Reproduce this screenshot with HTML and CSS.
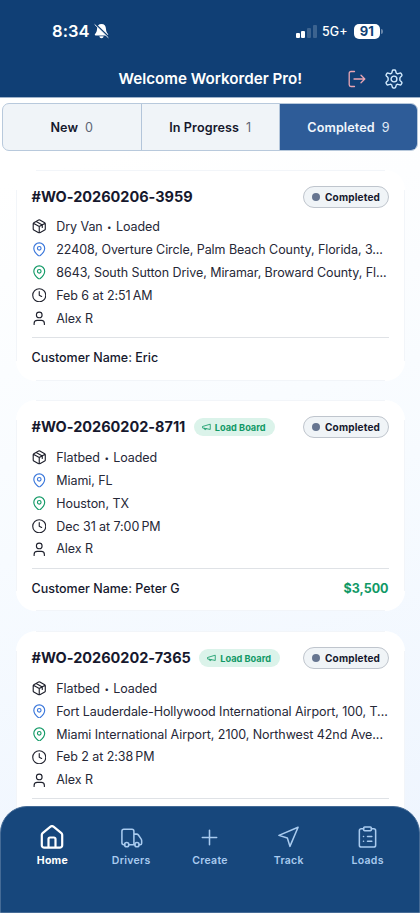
FILE: index.html
```html
<!DOCTYPE html>
<html lang="en">
<head>
<meta charset="utf-8">
<title>Workorders</title>
<link rel="stylesheet" href="styles.css">
</head>
<body>
<svg class="defs" width="0" height="0">
  <symbol id="box" viewBox="0 0 24 24"><path d="M22 8a2 2 0 0 0-1-1.730l-8-4.500a2 2 0 0 0-2 0l-8 4.500A2 2 0 0 0 2 8v8.500a2 2 0 0 0 1 1.730l8 4.500a2 2 0 0 0 2 0l8-4.500A2 2 0 0 0 22 16.500ZM2.300 7l9.700 5.500L21.700 7M12 23V12.500M7 4.200l10 5.700v4"/></symbol>
  <symbol id="pin" viewBox="0 0 24 24"><path d="M21 10.500c0 5-5.500 10.500-7.800 12.200a1.900 1.900 0 0 1-2.400 0C8.500 21 3 15.500 3 10.500a9 9 0 0 1 18 0"/><circle cx="12" cy="10.500" r="3"/></symbol>
  <symbol id="clock" viewBox="0 0 24 24"><circle cx="12" cy="12" r="10.800"/><path d="M12 6v6l4 2"/></symbol>
  <symbol id="user" viewBox="0 0 24 24"><circle cx="12" cy="6.500" r="4.700"/><path d="M20.500 22.500v-2a5 5 0 0 0-5-5h-7a5 5 0 0 0-5 5v2"/></symbol>
  <symbol id="horn" viewBox="0 0 24 24"><path d="M2 10.500 22 4.500v14L2 14.500ZM11.600 17a3 3 0 1 1-5.800-1.600"/></symbol>
</svg>

<header class="top">
  <div class="status">
    <div class="time">8:34
      <svg class="bell" viewBox="0 0 16 16"><path fill="#fff" d="M8 .5C4.900.5 3.400 2.700 3.300 5.300c-.1 3-.9 4.500-2.200 5.800-.5.600-.2 1.600.6 1.600h12.600c.8 0 1.100-1 .6-1.600-1.300-1.300-2.100-2.800-2.200-5.800C12.600 2.700 11.100.5 8 .5M5.700 13.500h4.600c-.2 1.300-1.100 2.100-2.300 2.100s-2.100-.8-2.300-2.100"/><path d="M2.300 1.300 15.300 14" stroke="#103f75" stroke-width="1.700"/><path d="M1 1.300 15 14.900" stroke="#fff" stroke-width="1" stroke-linecap="round"/></svg>
    </div>
    <div class="signals">
      <div class="bars"><i></i><i></i><i></i><i></i></div>
      <span class="net">5G+</span>
      <div class="battery"><b>91</b><i></i></div>
    </div>
  </div>
  <div class="titlebar">
    <h1>Welcome Workorder Pro!</h1>
    <div class="actions">
      <svg class="logout" viewBox="0 0 18 18"><path d="M6.500 1.500H3A1.800 1.800 0 0 0 1.200 3.300v11.400A1.800 1.800 0 0 0 3 16.500h3.500M6 9h10.700M13 5.200 16.800 9 13 12.800"/></svg>
      <svg class="gear" viewBox="0 0 20 20"><path d="M8.300 1.900Q8.500 1 9.400 1h1.200q.9 0 1.100.9l.4 1.700q.1.500.6.700l.5.300q.5.300 1 .1l1.700-.6q.8-.3 1.300.5l.6 1q.4.800-.2 1.400L16.300 8.200q-.4.400-.4.900v1.800q0 .5.400.9l1.300 1.200q.6.600.2 1.400l-.6 1q-.5.800-1.300.5l-1.700-.6q-.5-.2-1 .1l-.5.300q-.5.200-.6.700l-.4 1.700q-.2.900-1.100.9H9.400q-.9 0-1.100-.9l-.4-1.700q-.1-.5-.6-.7l-.5-.3q-.5-.3-1-.1l-1.700.6q-.8.300-1.300-.5l-.6-1q-.4-.8.2-1.400l1.300-1.200q.4-.4.400-.9V9.100q0-.5-.4-.9L2.400 7Q1.800 6.400 2.200 5.600l.6-1q.5-.8 1.300-.5l1.700.6q.5.200 1-.1l.5-.3q.5-.2.600-.7Z"/><circle cx="10" cy="10" r="2.900"/></svg>
    </div>
  </div>
</header>

<nav class="tabs">
  <div class="tab"><b>New</b><span>0</span></div>
  <div class="tab"><b>In Progress</b><span>1</span></div>
  <div class="tab active"><b>Completed</b><span>9</span></div>
</nav>

<main class="list">
  <article class="card">
    <div class="head"><h2>#WO-20260206-3959</h2><span class="state"><i></i>Completed</span></div>
    <div class="row"><svg><use href="#box"/></svg><span>Dry Van <small>•</small> Loaded</span></div>
    <div class="row"><svg class="from"><use href="#pin"/></svg><span>22408, Overture Circle, Palm Beach County, Florida, 3...</span></div>
    <div class="row"><svg class="to"><use href="#pin"/></svg><span>8643, South Sutton Drive, Miramar, Broward County, Fl...</span></div>
    <div class="row"><svg><use href="#clock"/></svg><span>Feb 6 at 2:51&#8239;AM</span></div>
    <div class="row"><svg><use href="#user"/></svg><span>Alex R</span></div>
    <div class="foot"><span>Customer Name: Eric</span></div>
  </article>
  <article class="card">
    <div class="head"><h2>#WO-20260202-8711</h2><span class="board"><svg><use href="#horn"/></svg>Load Board</span><span class="state"><i></i>Completed</span></div>
    <div class="row"><svg><use href="#box"/></svg><span>Flatbed <small>•</small> Loaded</span></div>
    <div class="row"><svg class="from"><use href="#pin"/></svg><span>Miami, FL</span></div>
    <div class="row"><svg class="to"><use href="#pin"/></svg><span>Houston, TX</span></div>
    <div class="row"><svg><use href="#clock"/></svg><span>Dec 31 at 7:00&#8239;PM</span></div>
    <div class="row"><svg><use href="#user"/></svg><span>Alex R</span></div>
    <div class="foot"><span>Customer Name: Peter G</span><b>$3,500</b></div>
  </article>
  <article class="card">
    <div class="head"><h2>#WO-20260202-7365</h2><span class="board"><svg><use href="#horn"/></svg>Load Board</span><span class="state"><i></i>Completed</span></div>
    <div class="row"><svg><use href="#box"/></svg><span>Flatbed <small>•</small> Loaded</span></div>
    <div class="row"><svg class="from"><use href="#pin"/></svg><span>Fort Lauderdale-Hollywood International Airport, 100, T...</span></div>
    <div class="row"><svg class="to"><use href="#pin"/></svg><span>Miami International Airport, 2100, Northwest 42nd Ave...</span></div>
    <div class="row"><svg><use href="#clock"/></svg><span>Feb 2 at 2:38&#8239;PM</span></div>
    <div class="row"><svg><use href="#user"/></svg><span>Alex R</span></div>
    <div class="foot"></div>
  </article>
</main>

<nav class="dock">
  <a class="item on"><svg viewBox="0 0 24 24"><path d="M1.800 9.800q0-1 .8-1.700L10.500 1.700q1.500-1.200 3 0l7.900 6.400q.8.700.8 1.700v10.400a2.500 2.500 0 0 1-2.500 2.500H4.300a2.500 2.500 0 0 1-2.500-2.500ZM8.500 22.500V14a1.500 1.500 0 0 1 1.500-1.500h4a1.500 1.500 0 0 1 1.500 1.500v8.500"/></svg><span>Home</span></a>
  <a class="item"><svg viewBox="0 0 24 24"><path d="M5 20H4a2 2 0 0 1-2-2V6a2 2 0 0 1 2-2h8.500a2 2 0 0 1 2 2v14M9.200 20h6.300M14.500 9h3q1 0 1.700.9l2.900 4.300q.5.800.5 1.800v2.500q0 1.500-1.500 1.500h-1"/><circle cx="7" cy="20" r="2.200"/><circle cx="17.700" cy="20" r="2.200"/></svg><span>Drivers</span></a>
  <a class="item"><svg viewBox="0 0 24 24"><path d="M4.500 12.500h15M12 5v15"/></svg><span>Create</span></a>
  <a class="item"><svg viewBox="0 0 24 24"><path d="M22 1.800 2 10.300l8.800 2.700 2.700 8.800Z"/></svg><span>Track</span></a>
  <a class="item"><svg viewBox="0 0 24 24"><rect x="8" y="1.500" width="8" height="4" rx="1"/><path d="M16 3.500h2.500a2 2 0 0 1 2 2V20.500a2 2 0 0 1-2 2h-13a2 2 0 0 1-2-2V5.500a2 2 0 0 1 2-2H8M12 11.500h4.500M12 16.500h4.500M7.800 11.500h.1M7.800 16.500h.1"/></svg><span>Loads</span></a>
</nav>
</body>
</html>
```
FILE: styles.css
```css
* { box-sizing: border-box; }
body {
  margin: 0;
  width: 420px;
  height: 913px;
  overflow: hidden;
  position: relative;
  font-family: Inter, "Liberation Sans", sans-serif;
  color: #16182d;
  background: linear-gradient(165deg, #fff 18%, #f7fbff 55%, #edf4fe 100%);
}
svg { fill: none; stroke: currentColor; stroke-linecap: round; stroke-linejoin: round; flex: none; display: block; }
.defs { position: absolute; }
h1, h2 { margin: 0; }

.top { height: 97.5px; background: #103f75; color: #fff; border-bottom: 1px solid #9eb2ca; }
.status { height: 60px; padding: 2px 37px 0 52px; display: flex; justify-content: space-between; align-items: center; }
.time { display: flex; align-items: center; gap: 4px; font-size: 16.5px; font-weight: 600; letter-spacing: .1px; }
.bell { width: 15px; height: 16px; stroke: none; }
.signals { display: flex; align-items: center; }
.bars { display: flex; align-items: flex-end; gap: 1.600px; height: 13px; }
.bars i { width: 4px; border-radius: 1px; background: #fff; height: 5px; }
.bars i:nth-child(2) { height: 7px; }
.bars i:nth-child(3) { height: 10px; background: #3c638f; }
.bars i:nth-child(4) { height: 13px; background: #3c638f; }
.net { margin: 1px 6px 0 5.500px; font-size: 12.500px; font-weight: 500; }
.battery { display: flex; align-items: center; gap: 1px; }
.battery b { width: 26.5px; height: 15px; border-radius: 5px; background: #fff; color: #103f75; font-size: 13px; line-height: 15.500px; text-align: center; font-weight: 700; }
.battery i { width: 2px; height: 5px; border-radius: 0 2px 2px 0; background: #6886aa; }
.titlebar { height: 37px; display: grid; grid-template-columns: 118.500px 1fr auto; padding-right: 16px; align-items: center; }
.titlebar h1 { grid-column: 2; font-size: 15.200px; font-weight: 600; line-height: 37px; white-space: nowrap; }
.actions { display: flex; align-items: center; gap: 18px; padding-top: 1px; }
.logout { width: 18px; height: 18px; color: #e9a5b3; stroke-width: 1.300; }
.gear { width: 20px; height: 20px; color: #d4ecff; stroke-width: 1.400; }

.tabs { display: grid; grid-template-columns: 138.500px 138.500px 1fr; margin: 5.500px 2px 0; height: 48px; border: 1px solid #b8c9dc; border-radius: 7px; overflow: hidden; background: #f0f4f8; }
.tab { display: flex; align-items: center; justify-content: center; gap: 7px; font-size: 12.600px; letter-spacing: .1px; border-right: 1px solid #b3c5da; }
.tab b { font-weight: 600; }
.tab span { color: #5c6475; }
.tab.active { background: #2e5c98; color: #f1f6fc; border-right: 0; }
.tab.active span { color: #e0eaf6; }

.list { padding: 18.500px 15.500px 0; display: grid; grid-template-columns: minmax(0, 1fr); gap: 19.900px; }
.card { position: relative; height: 211px; padding: 16px 16px 0; background: #fff; border-radius: 20px; }
.card::before, .card::after { content: ""; position: absolute; border: 0 solid #f2f5f9; pointer-events: none; }
.card::before { inset: 0 20px; border-width: 1px 0; }
.card::after { inset: 20px 0; border-width: 0 1px; }
.head { display: flex; align-items: center; height: 22px; margin-bottom: 7.600px; }
.head h2 { font-size: 14.500px; font-weight: 700; line-height: 22px; white-space: nowrap; letter-spacing: -.02px; }
.state { margin-left: auto; height: 22px; width: 86px; border: 1px solid #bfc5cd; border-radius: 11px; background: #f0f4f7; display: flex; align-items: center; gap: 5.500px; padding-left: 8px; font-size: 10px; letter-spacing: .18px; font-weight: 700; white-space: nowrap; }
.state i { width: 8px; height: 8px; border-radius: 50%; background: #667590; flex: none; }
.board { margin-left: 8.500px; height: 18px; width: 81px; border-radius: 9px; background: #dbf3ea; color: #119966; display: flex; align-items: center; gap: 4px; padding-left: 8px; font-size: 9.200px; font-weight: 700; white-space: nowrap; }
.board svg { width: 9px; height: 10px; stroke-width: 2.200; }
.row { display: flex; align-items: center; height: 22.900px; gap: 10.300px; font-size: 12.500px; letter-spacing: -.07px; white-space: nowrap; color: #262837; }
.row small { display: inline-block; font-size: 8px; vertical-align: 1px; margin: 0 1px; }
.row svg { width: 14.500px; height: 14.500px; stroke-width: 1.900; color: #20222e; }
.row .from { color: #3976db; }
.row .to { color: #119966; }
.foot { margin-top: 7.100px; border-top: 1px solid #dfe2e6; height: 40px; display: flex; align-items: center; justify-content: space-between; font-size: 12.500px; font-weight: 500; white-space: nowrap; }
.foot b { color: #119966; font-weight: 700; }

.dock { position: absolute; left: 0; right: 0; bottom: 0; height: 107px; padding: 17.500px 12px 0; display: grid; grid-template-columns: repeat(5, 1fr); background: #17477c; border: 1px solid #456b96; border-radius: 27px 27px 0 0; }
.item { display: flex; flex-direction: column; align-items: center; gap: 5.500px; color: #a9cbef; font-size: 10.500px; font-weight: 600; letter-spacing: .3px; line-height: 14px; }
.item svg { width: 23px; height: 24px; stroke-width: 1.600; }
.item.on { color: #fff; font-weight: 700; }
.item.on svg { width: 24px; stroke-width: 2.200; }
```
